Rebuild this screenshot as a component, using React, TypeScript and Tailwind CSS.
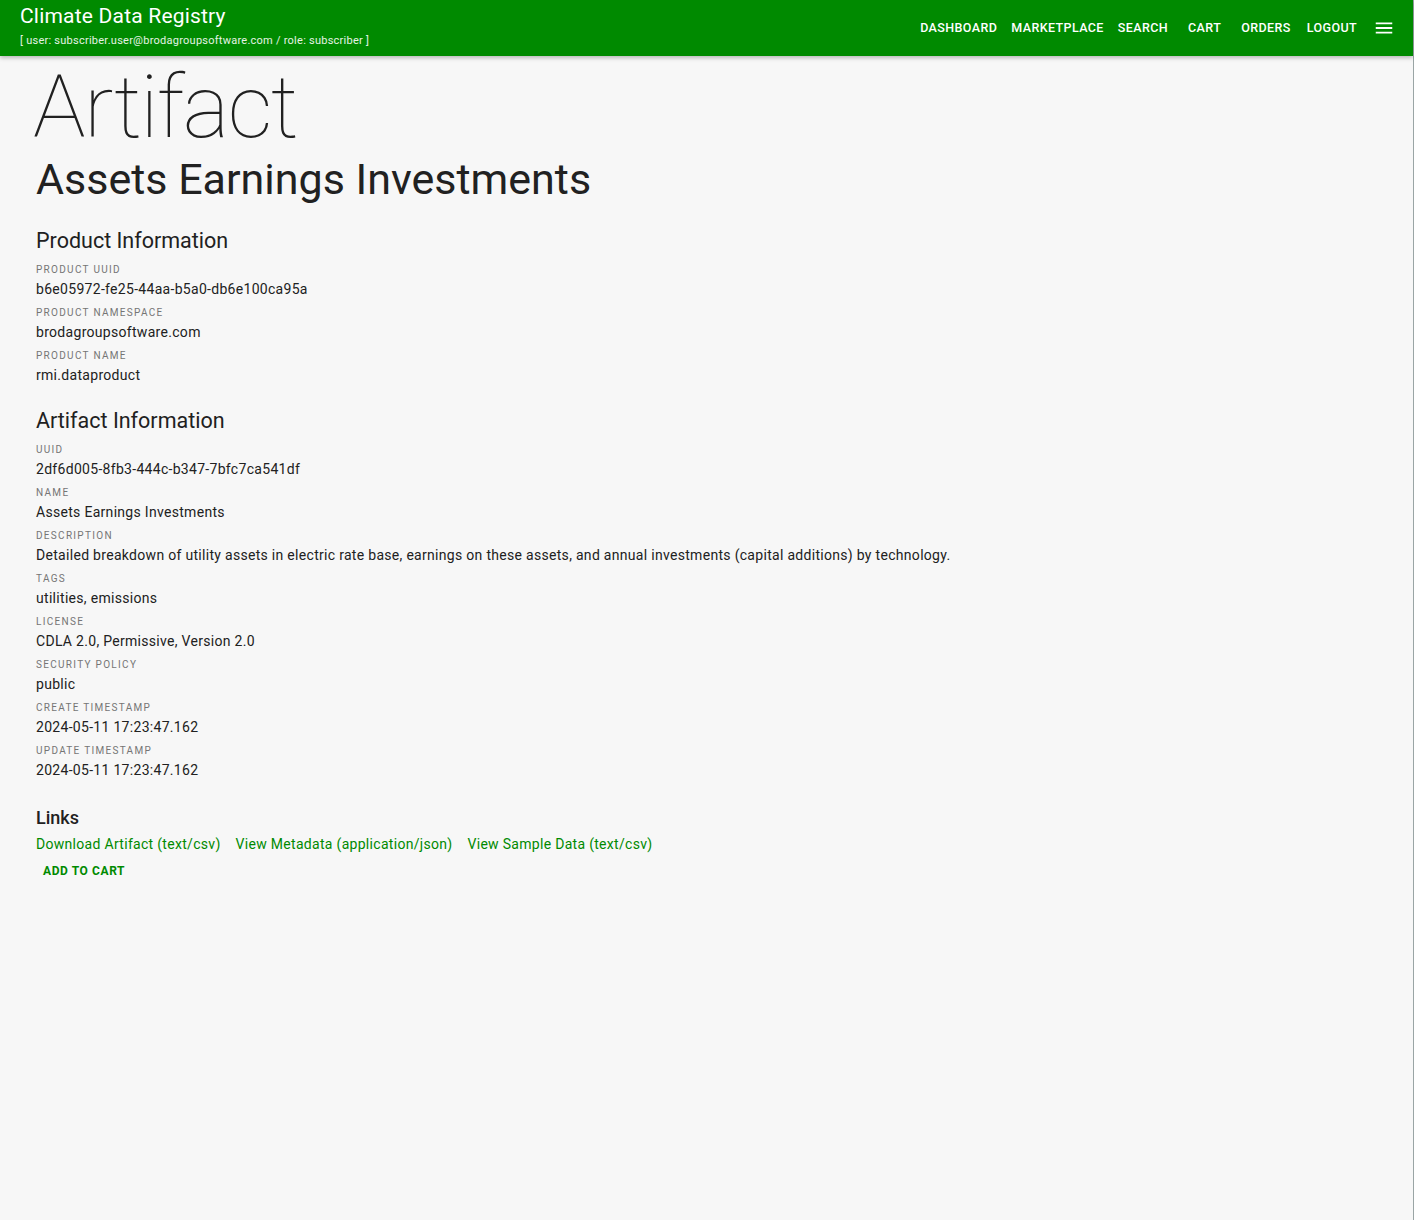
import React from "react";

const GREEN = "text-[#008a00]";

type Field = { label: string; value: string };

const productFields: Field[] = [
  { label: "Product UUID", value: "b6e05972-fe25-44aa-b5a0-db6e100ca95a" },
  { label: "Product Namespace", value: "brodagroupsoftware.com" },
  { label: "Product Name", value: "rmi.dataproduct" },
];

const artifactFields: Field[] = [
  { label: "UUID", value: "2df6d005-8fb3-444c-b347-7bfc7ca541df" },
  { label: "Name", value: "Assets Earnings Investments" },
  {
    label: "Description",
    value:
      "Detailed breakdown of utility assets in electric rate base, earnings on these assets, and annual investments (capital additions) by technology.",
  },
  { label: "Tags", value: "utilities, emissions" },
  { label: "License", value: "CDLA 2.0, Permissive, Version 2.0" },
  { label: "Security Policy", value: "public" },
  { label: "Create Timestamp", value: "2024-05-11 17:23:47.162" },
  { label: "Update Timestamp", value: "2024-05-11 17:23:47.162" },
];

function FieldList({ fields }: { fields: Field[] }) {
  return (
    <div className="mt-[5px]">
      {fields.map((f) => (
        <div key={f.label} className="mb-[5px]">
          <div className="text-[10px] leading-4 uppercase tracking-[1.3px] text-[#757575]">
            {f.label}
          </div>
          <div className="text-[14px] leading-[22px] text-[#212121] tracking-[0.3px]">
            {f.value}
          </div>
        </div>
      ))}
    </div>
  );
}

function Header() {
  const nav = [
    { label: "Dashboard", ml: "" },
    { label: "Marketplace", ml: "ml-[14px]" },
    { label: "Search", ml: "ml-[14px]" },
    { label: "Cart", ml: "ml-[20px]" },
    { label: "Orders", ml: "ml-[20px]" },
    { label: "Logout", ml: "ml-[16px]" },
  ];
  return (
    <header className="h-14 bg-[#008a00] text-white flex items-center justify-between pl-5 pr-[18px] shadow-[0_2px_4px_rgba(0,0,0,0.25)] relative z-10">
      <div className="flex flex-col self-start pt-[4px]">
        <div className="text-[21px] leading-6 tracking-[0.2px]">Climate Data Registry</div>
        <div className="text-[11px] leading-4 mt-[5px] text-white/90 tracking-[0.25px]">
          [ user: subscriber.user@brodagroupsoftware.com / role: subscriber ]
        </div>
      </div>
      <nav className="flex items-center">
        {nav.map((n) => (
          <a key={n.label} className={`${n.ml} text-[12.5px] font-medium uppercase tracking-[0.4px] cursor-pointer`}>
            {n.label}
          </a>
        ))}
        <svg className="ml-[16px]" width="22" height="22" viewBox="0 0 24 24" fill="white">
          <path d="M3 6h18v2H3V6m0 5h18v2H3v-2m0 5h18v2H3v-2z" />
        </svg>
      </nav>
    </header>
  );
}

export default function App() {
  return (
    <div
      className="min-h-[1220px] bg-[#f7f7f7] border-r border-[#9aa5a5]"
      style={{ fontFamily: "Roboto, 'Noto Sans', sans-serif" }}
    >
      <Header />
      <main className="px-9">
        <h1 className="text-[88px] leading-[96px] font-thin tracking-[-1.6px] text-[#212121] mt-[3px] ml-[-3px]">
          Artifact
        </h1>
        <h2 className="text-[43px] leading-[52px] text-[#212121] mt-[-2px]">
          Assets Earnings Investments
        </h2>

        <section className="mt-[20px]">
          <h3 className="text-[21.5px] leading-8 text-[#212121]">Product Information</h3>
          <FieldList fields={productFields} />
        </section>

        <section className="mt-[19px]">
          <h3 className="text-[21.5px] leading-8 text-[#212121]">Artifact Information</h3>
          <FieldList fields={artifactFields} />
        </section>

        <section className="mt-[25px]">
          <h3 className="text-[18px] leading-6 font-medium text-[#212121]">Links</h3>
          <div className={`flex gap-[15px] mt-[4px] text-[14px] leading-5 tracking-[0.3px] ${GREEN}`}>
            <a className="cursor-pointer">Download Artifact (text/csv)</a>
            <a className="cursor-pointer">View Metadata (application/json)</a>
            <a className="cursor-pointer">View Sample Data (text/csv)</a>
          </div>
          <button className={`mt-[3px] h-7 px-[7px] text-[12px] font-bold uppercase tracking-[0.6px] ${GREEN}`}>
            Add to Cart
          </button>
        </section>
      </main>
    </div>
  );
}
